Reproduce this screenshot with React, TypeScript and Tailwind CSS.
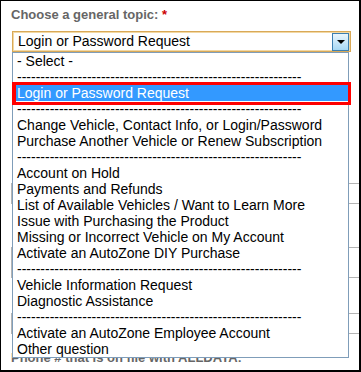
import React from 'react';

const DASH = '-------------------------------------------------------------';

type Item = { label: string; selected?: boolean };

const items: Item[] = [
  { label: '- Select -' },
  { label: DASH },
  { label: 'Login or Password Request', selected: true },
  { label: DASH },
  { label: 'Change Vehicle, Contact Info, or Login/Password' },
  { label: 'Purchase Another Vehicle or Renew Subscription' },
  { label: DASH },
  { label: 'Account on Hold' },
  { label: 'Payments and Refunds' },
  { label: 'List of Available Vehicles / Want to Learn More' },
  { label: 'Issue with Purchasing the Product' },
  { label: 'Missing or Incorrect Vehicle on My Account' },
  { label: 'Activate an AutoZone DIY Purchase' },
  { label: DASH },
  { label: 'Vehicle Information Request' },
  { label: 'Diagnostic Assistance' },
  { label: DASH },
  { label: 'Activate an AutoZone Employee Account' },
  { label: 'Other question' },
];

function FieldLabel({ children }: { children: React.ReactNode }) {
  return (
    <div className="text-[13px] leading-[16px] font-bold text-[#666666] whitespace-nowrap">
      {children} <span className="text-[#cc0000]">*</span>
    </div>
  );
}

export default function App() {
  return (
    <div className="w-[361px] h-[372px] bg-white border-l border-t border-r-2 border-b-2 border-black overflow-hidden font-['Liberation_Sans',Arial,sans-serif]">
      <div className="relative h-full pl-[10px] pt-[6px]">
        <FieldLabel>Choose a general topic:</FieldLabel>

        {/* topic select with open list */}
        <div className="relative ml-[1px] mt-[8px] w-[339px] h-[21px] z-10">
          <div className="h-full border border-[#d9a957] shadow-[inset_0_0_0_1px_#f2d8a4] bg-white pl-[5px] text-[14px] leading-[19px] text-black whitespace-nowrap">
            Login or Password Request
          </div>
          <div className="absolute top-[2px] right-[2px] w-[17px] h-[18px] border border-[#3c7fb1] bg-gradient-to-b from-[#eaf6fd] to-[#a7d8f4] flex items-center justify-center">
            <div className="w-0 h-0 border-l-[4px] border-r-[4px] border-t-[4px] border-l-transparent border-r-transparent border-t-black" />
          </div>

          <div className="absolute left-0 top-[21px] w-[337px] border border-[#7f9db9] bg-white">
            {items.map((it, i) => (
              <div
                key={i}
                className={
                  it.selected
                    ? 'h-[16px] pl-[4px] text-[14px] leading-[16px] whitespace-nowrap bg-[#3399ff] text-white'
                    : 'h-[16px] pl-[4px] text-[14px] leading-[16px] whitespace-nowrap text-black'
                }
              >
                {it.label}
              </div>
            ))}
          </div>

          {/* red highlight box */}
          <div className="absolute left-0 top-[51px] w-[339px] h-[23px] border-[3px] border-l-4 border-[#ff0000]" />
        </div>

        {/* form fields behind the list */}
        <div className="mt-[131px] w-[420px] h-[21px] border border-[#b4b4b4]" />
        <div className="mt-[43px] w-[420px] h-[31px] border border-[#b4b4b4]" />
        <div className="mt-[35px] w-[420px] h-[21px] border border-[#b4b4b4]" />
        <div className="mt-[16px]">
          <FieldLabel>Phone # that is on file with ALLDATA:</FieldLabel>
        </div>
      </div>
    </div>
  );
}
